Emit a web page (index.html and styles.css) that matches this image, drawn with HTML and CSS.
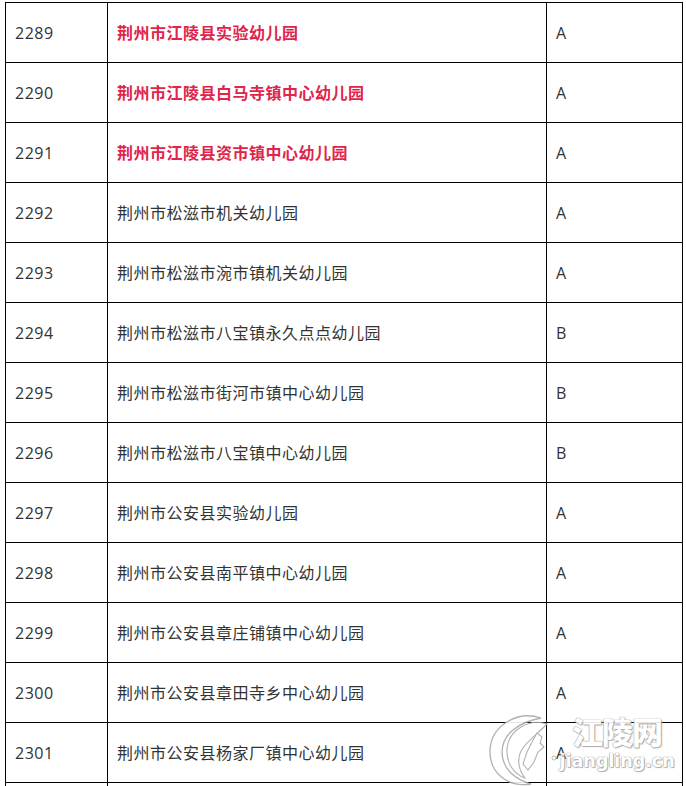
FILE: index.html
```html
<!DOCTYPE html>
<html lang="zh">
<head>
<meta charset="utf-8">
<link rel="stylesheet" href="styles.css">
</head>
<body>
<div class="page">
<table class="list">
  <colgroup><col class="c1"><col class="c2"><col class="c3"></colgroup>
  <tr><td>2289</td><td class="hl">荆州市江陵县实验幼儿园</td><td>A</td></tr>
  <tr><td>2290</td><td class="hl">荆州市江陵县白马寺镇中心幼儿园</td><td>A</td></tr>
  <tr><td>2291</td><td class="hl">荆州市江陵县资市镇中心幼儿园</td><td>A</td></tr>
  <tr><td>2292</td><td>荆州市松滋市机关幼儿园</td><td>A</td></tr>
  <tr><td>2293</td><td>荆州市松滋市涴市镇机关幼儿园</td><td>A</td></tr>
  <tr><td>2294</td><td>荆州市松滋市八宝镇永久点点幼儿园</td><td>B</td></tr>
  <tr><td>2295</td><td>荆州市松滋市街河市镇中心幼儿园</td><td>B</td></tr>
  <tr><td>2296</td><td>荆州市松滋市八宝镇中心幼儿园</td><td>B</td></tr>
  <tr><td>2297</td><td>荆州市公安县实验幼儿园</td><td>A</td></tr>
  <tr><td>2298</td><td>荆州市公安县南平镇中心幼儿园</td><td>A</td></tr>
  <tr><td>2299</td><td>荆州市公安县章庄铺镇中心幼儿园</td><td>A</td></tr>
  <tr><td>2300</td><td>荆州市公安县章田寺乡中心幼儿园</td><td>A</td></tr>
  <tr><td>2301</td><td>荆州市公安县杨家厂镇中心幼儿园</td><td>A</td></tr>
  <tr><td></td><td></td><td></td></tr>
</table>
<div class="watermark">
  <svg class="wm-logo" width="74" height="74" viewBox="0 0 74 74">
    <path d="M54 6 C30 -2 4 14 3 38 C2 60 20 76 44 72 C30 68 15 58 15 40 C15 22 32 10 54 6 Z" fill="#fff" stroke="#aaa" stroke-width="1.3"/>
    <path d="M60 12 C42 6 22 18 20 36 C19 50 26 62 38 66 C30 56 30 44 36 36 C40 30 48 24 60 12 Z" fill="#fff" stroke="#aaa" stroke-width="1.1"/>
    <path d="M40 40 L46 28 L50 21 L55 25 L53 31 L57 35 L51 40 L47 50 L41 58 L36 52 Z" fill="#fff" stroke="#aaa" stroke-width="1.1"/>
    <circle cx="67" cy="46" r="2" fill="#fff" stroke="#aaa" stroke-width="0.9"/>
  </svg>
  <div class="wm-text">
    <div class="wm-cn">江陵网</div>
    <div class="wm-en">jiangling.cn</div>
  </div>
</div>
</div>
</body>
</html>
```

FILE: styles.css
```css
html, body {
  margin: 0;
  padding: 0;
  background: #fff;
  overflow: hidden;
}
.page {
  position: relative;
  width: 686px;
  height: 786px;
  overflow: hidden;
  padding: 2px 0 0 5px;
  box-sizing: border-box;
}
.list {
  border-collapse: collapse;
  table-layout: fixed;
  width: 677px;
  font-family: "Open Sans", "Noto Sans CJK SC", sans-serif;
  font-size: 16px;
  letter-spacing: 0.5px;
  color: #333;
}
.c1 { width: 102px; }
.c2 { width: 439px; }
.c3 { width: 136px; }
.list td {
  border: 1px solid #000;
  height: 59px;
  padding: 0 0 0 9px;
  vertical-align: middle;
  white-space: nowrap;
  line-height: 20px;
}
.list td.hl {
  color: #e0244c;
  font-weight: bold;
}
.watermark {
  position: absolute;
  left: 487px;
  top: 712px;
  display: flex;
  align-items: flex-start;
  opacity: 0.9;
}
.wm-logo {
  display: block;
}
.wm-text {
  margin-left: 2px;
  display: flex;
  flex-direction: column;
  align-items: center;
  width: 108px;
}
.wm-cn {
  font-family: "Noto Sans CJK SC", sans-serif;
  font-weight: 900;
  font-size: 31px;
  line-height: 38px;
  letter-spacing: -1px;
  color: #fff;
  text-shadow: 0 0 1px #888, 0 0 1px #888, 1px 1px 1px #aaa;
}
.wm-en {
  font-family: "DejaVu Sans", sans-serif;
  font-weight: bold;
  font-size: 18px;
  line-height: 22px;
  margin-top: 0;
  letter-spacing: -0.3px;
  color: #fff;
  text-shadow: 0 0 1px #888, 0 0 1px #888, 1px 1px 1px #aaa;
}
```
